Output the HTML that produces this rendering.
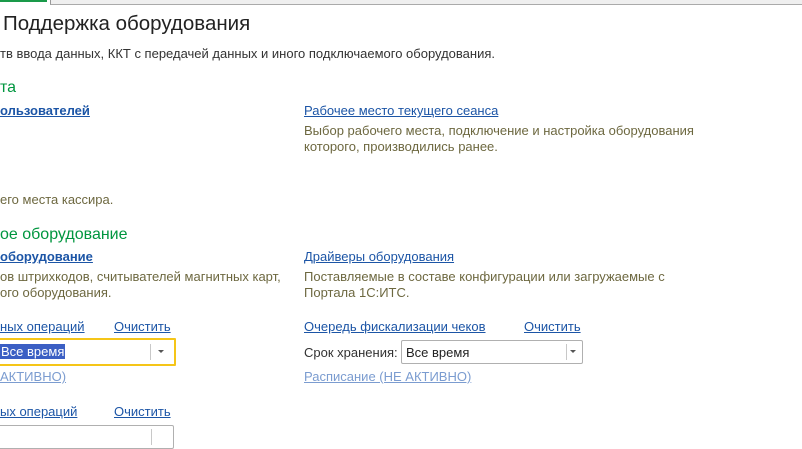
<!DOCTYPE html>
<html><head><meta charset="utf-8"><style>
body{margin:0;width:802px;height:433px;overflow:hidden;background:#fff;font-family:"Liberation Sans",Arial,sans-serif;font-size:13px;color:#333;position:relative}
.a{position:absolute;white-space:nowrap}
.l{color:#1c55a6;text-decoration:underline}
.b{font-weight:bold}
.g{color:#00963f;font-size:16px}
.d{color:#6d6840;line-height:16px}
.dis{color:#7b9cd0;text-decoration:underline}
.box{position:absolute;border:1px solid #b0b0b0;border-radius:2px;background:#fff;height:22px}
.sep{position:absolute;top:3px;width:1px;height:16px;background:#c8c8c8}
.arr{position:absolute;top:9px;width:0;height:0;border-left:3px solid transparent;border-right:3px solid transparent;border-top:3px solid #555}
</style></head><body>
<div class="a" style="left:0;top:0;width:47px;height:2px;background:#1a9a4a"></div>
<div class="a" style="left:50px;top:0;width:752px;height:4px;background:#efefef;border-left:1px solid #999;border-bottom:1px solid #aaa"></div>
<div class="a" style="left:3px;top:12px;font-size:20.5px;color:#222">Поддержка оборудования</div>
<div class="a" style="left:0;top:46px">тв ввода данных, ККТ с передачей данных и иного подключаемого оборудования.</div>
<div class="a g" style="left:0;top:79px">та</div>
<div class="a l b" style="left:0;top:103px;font-size:13px">ользователей</div>
<div class="a l" style="left:304px;top:103px">Рабочее место текущего сеанса</div>
<div class="a d" style="left:304px;top:123px">Выбор рабочего места, подключение и настройка оборудования<br>которого, производились ранее.</div>
<div class="a d" style="left:0;top:192px">его места кассира.</div>
<div class="a g" style="left:0;top:226px">ое оборудование</div>
<div class="a l b" style="left:0;top:249px;font-size:13px">оборудование</div>
<div class="a l" style="left:304px;top:249px">Драйверы оборудования</div>
<div class="a d" style="left:0;top:269px">ов штрихкодов, считывателей магнитных карт,<br>ого оборудования.</div>
<div class="a d" style="left:304px;top:269px">Поставляемые в составе конфигурации или загружаемые с<br>Портала 1С:ИТС.</div>
<div class="a l" style="left:0;top:319px">ных операций</div>
<div class="a l" style="left:114px;top:319px">Очистить</div>
<div class="a l" style="left:304px;top:319px">Очередь фискализации чеков</div>
<div class="a l" style="left:524px;top:319px">Очистить</div>
<div class="box" style="left:-4px;top:338px;width:176px;height:24px;border:2px solid #f5c518;border-radius:1px">
<span class="a" style="left:2px;top:4px;background:#3b5fc4;color:#fff;padding:0 1px">Все время</span>
<div class="sep" style="left:152px;top:4px"></div><div class="arr" style="left:160px;top:10px"></div></div>
<div class="a" style="left:304px;top:345px">Срок хранения:</div>
<div class="box" style="left:401px;top:340px;width:180px">
<span class="a" style="left:4px;top:4px;color:#222">Все время</span>
<div class="sep" style="left:164px"></div><div class="arr" style="left:168px"></div></div>
<div class="a dis" style="left:0;top:369px">АКТИВНО)</div>
<div class="a dis" style="left:304px;top:369px">Расписание (НЕ АКТИВНО)</div>
<div class="a l" style="left:0;top:404px">ых операций</div>
<div class="a l" style="left:114px;top:404px">Очистить</div>
<div class="box" style="left:-4px;top:425px;width:176px">
<div class="sep" style="left:154px"></div></div>
</body></html>
